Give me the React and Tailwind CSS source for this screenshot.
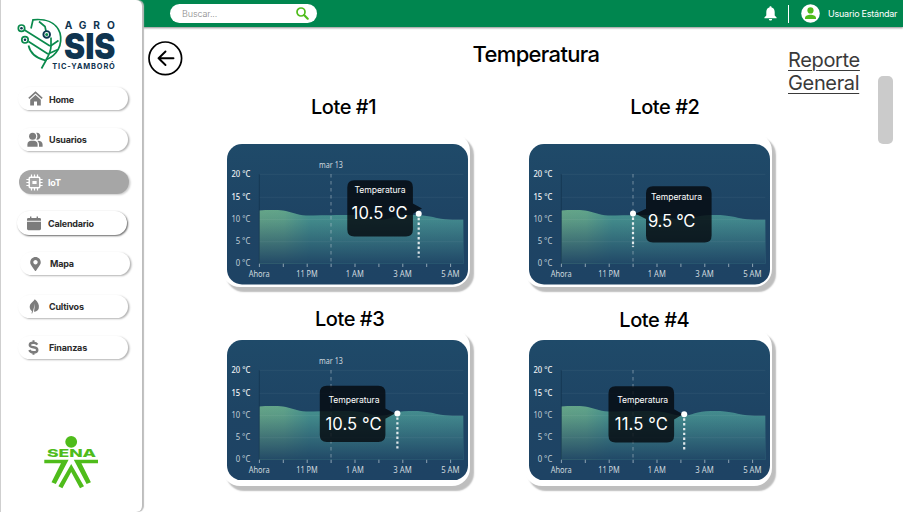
import { FaMapMarkerAlt } from 'react-icons/fa';

const NOTO = "'Noto Sans', 'Open Sans', sans-serif";
const INTER = 'Inter, sans-serif';

function AgroLogo() {
  return (
    <svg className="block overflow-visible" width="100" height="54" viewBox="17 17 100 54">
      <g fill="none" stroke="#0a8a4c" strokeWidth="1.7">
        <path d="M31 28.5 L33 19.8 C45 18.5 56 22 60 33 C63 45 57 55 46.5 59.5 L41.5 68.5" />
        <path d="M24.5 30 L50 46 M28.5 41.5 L48 54 M51 37.5 V46 C51 50 49 55 46 60" />
        <path d="M39 21.5 L45 26.5 L46 31 M50.5 46 L58.5 40.5 M49 53.5 L58 49.5 M28.5 45.5 C30 52 35 58 45.5 60.5" />
        <circle cx="21.5" cy="28.2" r="3.2" />
        <circle cx="25" cy="39.8" r="3.2" />
      </g>
      <circle cx="21.5" cy="28.2" r="1.3" fill="#0d3550" />
      <circle cx="25" cy="39.8" r="1.3" fill="#0d3550" />
      <circle cx="46.7" cy="34.4" r="3.3" fill="#fff" stroke="#0d3550" strokeWidth="1.9" />
      <circle cx="46.7" cy="34.4" r="1.5" fill="#0a8a4c" />
      <g fill="#0f3450" fontFamily={INTER}>
        <text x="64.8" y="29.2" fontSize="10.2" fontWeight="700" textLength="50">AGRO</text>
        <text x="64" y="58.8" fontSize="35" fontWeight="900" textLength="51.5" lengthAdjust="spacingAndGlyphs">SIS</text>
        <text x="52.3" y="69.3" fontSize="7.4" fontWeight="700" textLength="62.5">TIC-YAMBORÓ</text>
      </g>
    </svg>
  );
}

function SenaLogo() {
  return (
    <svg className="block" width="56" height="54" viewBox="43 435 56 54" fill="#4fbc1b">
      <circle cx="71.2" cy="441.8" r="5.9" />
      <text x="46.9" y="457.4" fontSize="10.4" fontWeight="800" fontFamily={INTER} textLength="49.2" lengthAdjust="spacingAndGlyphs">SENA</text>
      <path d="M44.3 459.7H68.6L55.8 484L51.5 482.3L61 463.3H44.3Z" />
      <path d="M98 459.7H73.8L86.6 484L90.9 482.3L81.4 463.3H98Z" />
      <path d="M71.2 464L84 486.3L80 488.3L71.2 472L62.4 488.3L58.4 486.3Z" />
    </svg>
  );
}

function HomeIcon() {
  return (
    <svg width="15" height="15" viewBox="0 0 15 15" fill="#7c7c7c">
      <path d="M7.5 0.3L14.7 6.8L13.6 8L7.5 2.6L1.4 8L0.3 6.8Z" />
      <path d="M7.5 4L12.8 8.7V14.6H9V10.4H6V14.6H2.2V8.7Z" />
    </svg>
  );
}

function UsersIcon() {
  return (
    <svg width="16" height="16" viewBox="0 0 16 16" fill="#7c7c7c">
      <circle cx="5.6" cy="4.2" r="3.5" />
      <path d="M0.4 14.8V12.6C0.4 10 2.2 8.8 4.2 8.8H6.8C9 8.8 10.6 10 10.6 12.6V14.8Z" />
      <path d="M9.2 0.8C11.6 0.3 13.4 2 13.4 4.2S11.6 8.1 9.2 7.6C10.8 5.6 10.8 2.8 9.2 0.8Z" />
      <path d="M10.4 8.9C13.4 8.6 15.6 10 15.6 12.6V14.8H12V12.6C12 11 11.4 9.8 10.4 8.9Z" />
    </svg>
  );
}

function ChipIcon() {
  return (
    <svg width="17" height="17" viewBox="0 0 17 17" fill="none" stroke="#fff">
      <rect x="3.2" y="3.2" width="10.6" height="10.6" rx="1.2" strokeWidth="1.5" />
      <rect x="6.4" y="7" width="4.2" height="3" fill="#fff" stroke="none" />
      <path
        strokeWidth="1.2"
        d="M5.5 0.4V3M8.5 0.4V3M11.5 0.4V3M5.5 14V16.6M8.5 14V16.6M11.5 14V16.6M0.4 5.5H3M0.4 8.5H3M0.4 11.5H3M14 5.5H16.6M14 8.5H16.6M14 11.5H16.6"
      />
    </svg>
  );
}

function CalendarIcon() {
  return (
    <svg width="14" height="15" viewBox="0 0 14 15" fill="#7c7c7c">
      <path d="M3 0.5H4.4V2H9.6V0.5H11V2H12.6Q14 2 14 3.3V4.8H0V3.3Q0 2 1.4 2H3Z" />
      <path d="M0 5.8H14V12.8Q14 14.2 12.6 14.2H1.4Q0 14.2 0 12.8Z" />
    </svg>
  );
}

function LeafIcon() {
  return (
    <svg width="11" height="15" viewBox="0 0 11 15" fill="#7c7c7c">
      <path d="M5.8 0.3C9 3 10.5 6 9.8 9.2C9.2 11.5 7.5 12.6 5 12.8L6 4.5L4 12.2L3.2 14.6L2.5 14.4L3 12.3C0.6 10.5 0.2 8 1.2 5.6C2.2 3.5 4.5 2.8 5.8 0.3Z" />
    </svg>
  );
}

function DollarIcon() {
  return (
    <svg width="11" height="15" viewBox="0 0 11 15" fill="none" stroke="#7c7c7c">
      <path d="M9.3 4.6C8.6 3.2 7.2 2.7 5.5 2.7C3.3 2.7 1.8 3.5 1.8 4.9C1.8 6.6 3.4 6.9 5.5 7.3C7.8 7.7 9.3 8.2 9.3 9.9C9.3 11.4 7.8 12.3 5.5 12.3C3.5 12.3 2 11.6 1.4 10" strokeWidth="2.4" />
      <path d="M5.5 0.2V3M5.5 12V14.8" strokeWidth="2" />
    </svg>
  );
}

const NAV = [
  { label: 'Home', icon: <HomeIcon />, box: 'ml-[18px] mt-[16px] h-[23px] pl-[10px]', text: 'ml-[6px] mt-[3px]', look: 'bg-white shadow-[1.5px_1px_2px_rgba(0,0,0,0.3)]' },
  { label: 'Usuarios', icon: <UsersIcon />, box: 'ml-[18px] mt-[18px] h-[23px] pl-[9px]', text: 'ml-[6px]', look: 'bg-white shadow-[1.5px_1px_2px_rgba(0,0,0,0.3)]' },
  { label: 'IoT', icon: <ChipIcon />, box: 'ml-[19px] mt-[19px] h-[24px] pl-[7px]', text: 'ml-[5px] mt-px text-white', look: 'bg-[#a6a6a6] shadow-[1.5px_1px_2px_rgba(0,0,0,0.2)]' },
  { label: 'Calendario', icon: <CalendarIcon />, box: 'ml-[17px] mt-[17px] h-[24px] pl-[10px]', text: 'ml-[7px] mt-px', look: 'bg-white shadow-[1px_1px_2px_rgba(0,0,0,0.6)]' },
  { label: 'Mapa', icon: <FaMapMarkerAlt className="w-[13px]" size={14} color="#7c7c7c" />, box: 'ml-[20px] mt-[17px] h-[23px] pl-[9px]', text: 'ml-[8px]', look: 'bg-white shadow-[1.5px_1px_2px_rgba(0,0,0,0.3)]' },
  { label: 'Cultivos', icon: <LeafIcon />, box: 'ml-[18px] mt-[20px] h-[23px] pl-[11px]', text: 'ml-[9px]', look: 'bg-white shadow-[1.5px_1px_2px_rgba(0,0,0,0.3)]' },
  { label: 'Finanzas', icon: <DollarIcon />, box: 'ml-[18px] mt-[18px] h-[23px] pl-[10px]', text: 'ml-[10px]', look: 'bg-white shadow-[1.5px_1px_2px_rgba(0,0,0,0.3)]' },
];

function Sidebar() {
  return (
    <aside className="z-10 col-start-1 row-span-2 row-start-1 flex w-[142px] flex-col rounded-r-[6px] border-l border-[#cfcfcf] bg-white shadow-[2px_0_1px_#bdbdbd]">
      <div className="ml-[16px] mt-[17px]">
        <AgroLogo />
      </div>
      <nav className="-ml-px flex flex-col">
        {NAV.map((item) => (
          <a key={item.label} className={`flex w-[110px] items-center rounded-full text-[9px] font-bold tracking-[-0.2px] text-[#2b2b2b] ${item.box} ${item.look}`}>
            {item.icon}
            <span className={item.text}>{item.label}</span>
          </a>
        ))}
      </nav>
      <div className="ml-[42px] mt-[76px]">
        <SenaLogo />
      </div>
    </aside>
  );
}

function Header() {
  return (
    <header className="col-span-2 col-start-1 row-start-1 flex h-[27px] items-center bg-[#00864f] pl-[170px] shadow-[0_1px_2px_rgba(0,0,0,0.45)]">
      <div className="flex h-[19px] w-[147px] items-center justify-between rounded-full bg-white pl-[12px] pr-[8px] text-[9px] font-light tracking-[-0.1px] text-[#8a8a8a]">
        Buscar...
        <svg width="13" height="13" viewBox="0 0 13 13" fill="none" stroke="#4fbc1b" strokeLinecap="round">
          <circle cx="5" cy="5" r="4" strokeWidth="1.7" />
          <path d="M8.3 8.3L11.7 11.7" strokeWidth="2.2" />
        </svg>
      </div>
      <svg className="ml-[447px]" width="13" height="15" viewBox="0 0 13 15" fill="#fff">
        <path d="M6.5 0.3C7.2 0.3 7.6 0.8 7.6 1.5C9.7 2 10.7 3.8 10.7 6V9.6L12.6 11.6V12.3H0.4V11.6L2.3 9.6V6C2.3 3.8 3.3 2 5.4 1.5C5.4 0.8 5.8 0.3 6.5 0.3ZM4.9 13H8.1C8.1 14 7.4 14.6 6.5 14.6S4.9 14 4.9 13Z" />
      </svg>
      <div className="ml-[11px] h-[18px] w-px bg-white" />
      <svg className="ml-[12px]" width="19" height="19" viewBox="0 0 19 19">
        <circle cx="9.5" cy="9.5" r="9.3" fill="#fff" />
        <circle cx="9.5" cy="6.4" r="3.1" fill="#4fbc1b" />
        <path d="M4 14.2C4 11.6 7 10.7 9.5 10.7S15 11.6 15 14.2V15H4Z" fill="#4fbc1b" />
      </svg>
      <span className="ml-[8px] whitespace-nowrap text-[9px] tracking-[-0.23px] text-white">Usuario Estándar</span>
    </header>
  );
}

const WAVE = 'M32.3 66.4C40 65.8 50 65.8 56 66.4C64 67.4 70 71 79 71.4C98 71.8 116 70.4 130 71.4C140 72.4 146 75.7 154 75.7C163 75.7 167 71 182 71C201 70.6 206 73.5 214 74.8C222 76 229 75.7 236.3 75.7V119.7H32.3Z';

const TICKS = [0, 1, 2, 3, 4, 5, 6, 7, 8];
const HOURS = ['Ahora', '11 PM', '1 AM', '3 AM', '5 AM'];
const HOUR_WIDTHS = [21, 21.5, 18, 18.5, 18.5];
const DEGREES = ['20 °C', '15 °C', '10 °C', '5 °C', '0 °C'];

function Chart({ id, date, tip }) {
  const w = 65.6;
  const edge = tip.side === 'right' ? tip.x + w : tip.x;
  return (
    <svg className="block" width="241" height="140.5" viewBox="0 0 241 140.5">
      <defs>
        <linearGradient id={`bg${id}`} x1="0" y1="0" x2="0" y2="1">
          <stop offset="0" stopColor="#1f4a69" />
          <stop offset="0.5" stopColor="#1e4464" />
          <stop offset="1" stopColor="#1e4364" />
        </linearGradient>
        <linearGradient id={`hue${id}`} x1="0" y1="0" x2="1" y2="0">
          <stop offset="0" stopColor="#65a588" />
          <stop offset="0.12" stopColor="#61a48a" />
          <stop offset="0.25" stopColor="#46928f" />
          <stop offset="1" stopColor="#458e91" />
        </linearGradient>
        <linearGradient id={`fade${id}`} x1="0" y1="66" x2="0" y2="120" gradientUnits="userSpaceOnUse">
          <stop offset="0" stopColor="#1e4364" stopOpacity="0" />
          <stop offset="0.2" stopColor="#1e4364" stopOpacity="0.12" />
          <stop offset="1" stopColor="#1e4364" stopOpacity="0.93" />
        </linearGradient>
      </defs>
      <rect width="241" height="140.5" rx="15" fill={`url(#bg${id})`} />
      <path d={WAVE} fill={`url(#hue${id})`} />
      <path d={WAVE} fill={`url(#fade${id})`} />
      {[30.3, 53.3, 75.6, 97.7].map((y) => (
        <path key={y} d={`M32.3 ${y}H236.3`} stroke="#fff" strokeOpacity="0.08" strokeWidth="0.7" />
      ))}
      <path d="M32.3 30.3V119.7" stroke="#12304a" strokeOpacity="0.8" strokeWidth="0.8" />
      <path d="M104 30V119" stroke="#c5d2da" strokeOpacity="0.5" strokeWidth="1" strokeDasharray="3.5 3.5" />
      {TICKS.map((i) => (
        <path key={i} d={`M${32.4 + i * 23.9} 119.7V123`} stroke="#c5d2da" strokeOpacity="0.75" strokeWidth="0.9" />
      ))}
      <g fontFamily={NOTO} fontSize="8.7" fill="#cfd9df">
        {DEGREES.map((d, i) => (
          <text key={d} x="23.3" y={33.4 + i * 22.2} textAnchor="end" textLength={i < 3 ? 18.8 : 14.6} lengthAdjust="spacingAndGlyphs" fontWeight={i < 2 ? 500 : 400} fill={i < 2 ? '#eef2f4' : '#c2cfd7'}>{d}</text>
        ))}
        {HOURS.map((h, i) => (
          <text key={h} x={32.2 + i * 47.8} y="133.2" textAnchor="middle" textLength={HOUR_WIDTHS[i]} lengthAdjust="spacingAndGlyphs">{h}</text>
        ))}
        {date && <text x="104" y="24.2" textAnchor="middle" textLength="23.8" lengthAdjust="spacingAndGlyphs">{date}</text>}
      </g>
      <path
        d={`M${tip.dot[0]} ${tip.dot[1] + 4}V${tip.end}`}
        stroke="#fff"
        strokeOpacity="0.85"
        strokeWidth="2.2"
        strokeDasharray="2.4 2.4"
      />
      <path
        fill="#05090d"
        fillOpacity="0.81"
        d={
          `M${tip.x + 7} ${tip.y}h${w - 14}q7 0 7 7v42.2q0 7 -7 7h${14 - w}q-7 0 -7 -7v-42.2q0 -7 7 -7Z` +
          (tip.side === 'right'
            ? `M${edge} ${tip.point[1] - 5}L${tip.point[0]} ${tip.point[1]}L${edge} ${tip.point[1] + 5.3}Z`
            : `M${edge} ${tip.point[1] - 5}V${tip.point[1] + 5.3}L${tip.point[0]} ${tip.point[1]}Z`)
        }
      />
      <circle cx={tip.dot[0]} cy={tip.dot[1]} r="3" fill="#fff" />
      <g fill="#fff" fontFamily={INTER} textAnchor="middle">
        <text x={tip.labelX} y={tip.labelY} fontSize="8.6" textLength="51">Temperatura</text>
        <text x={tip.valueX} y={tip.valueY} fontSize="16.6" textLength={tip.valueW}>{tip.value}</text>
      </g>
    </svg>
  );
}

const LOTS = [
  {
    name: 'Lote #1', title: 'pl-[89px] h-[38px]', card: 'h-[154px]', date: 'mar 13',
    tip: { side: 'right', x: 120.3, y: 36.2, point: [195, 64.5], dot: [191.7, 69.8], end: 113.5, labelX: 153, labelY: 48.9, valueX: 152.6, valueY: 75.3, valueW: 56, value: '10.5 °C' },
  },
  {
    name: 'Lote #2', title: 'pl-[106px] h-[38px]', card: 'h-[154px]', date: null,
    tip: { side: 'left', x: 117, y: 42.2, point: [106.5, 69.8], dot: [104, 69.5], end: 103, labelX: 147.5, labelY: 55.9, valueX: 142.7, valueY: 82.5, valueW: 47.5, value: '9.5 °C' },
  },
  {
    name: 'Lote #3', title: 'pl-[93px] h-[21.5px]', card: 'h-[157px]', date: 'mar 13',
    tip: { side: 'right', x: 92.8, y: 45.7, point: [168, 73.4], dot: [170.4, 73.4], end: 110.8, labelX: 127, labelY: 63, valueX: 126.5, valueY: 90, valueW: 56, value: '10.5 °C' },
  },
  {
    name: 'Lote #4', title: 'pl-[95px] pt-[1px] h-[21.5px]', card: 'h-[157px]', date: null,
    tip: { side: 'right', x: 79.5, y: 46.2, point: [154, 74.3], dot: [155.2, 74.3], end: 111.5, labelX: 113.7, labelY: 63.4, valueX: 112.3, valueY: 90.3, valueW: 53, value: '11.5 °C' },
  },
];

function LotCard({ lot, index }) {
  return (
    <section>
      <h2 className={`text-[20px] font-medium leading-[24px] tracking-[-0.45px] text-black ${lot.title}`}>{lot.name}</h2>
      <div className={`w-[248px] rounded-[18px] bg-white pl-[5px] pt-[11px] shadow-[4px_4.5px_1.5px_#bebebe] ${lot.card}`}>
        <Chart id={index} date={lot.date} tip={lot.tip} />
      </div>
    </section>
  );
}

export default function App() {
  return (
    <div className="grid h-[512px] w-[903px] grid-cols-[144px_1fr] grid-rows-[27px_1fr] overflow-hidden bg-white font-[Inter,sans-serif]">
      <Header />
      <Sidebar />
      <main className="col-start-2 row-start-2 flex items-start">
        <button className="ml-[4px] mt-[14px]" aria-label="Volver">
          <svg className="block" width="35" height="35" viewBox="0 0 35 35" fill="none" stroke="#000">
            <circle cx="17.3" cy="17.3" r="16.3" strokeWidth="1.7" />
            <path d="M25.5 17.3H10.5M17.5 10.5L10.6 17.3L17.5 24" strokeWidth="1.9" strokeLinecap="round" strokeLinejoin="round" />
          </svg>
        </button>
        <div className="ml-[39px] w-[551px]">
          <h1 className="ml-[250.5px] mt-[14px] whitespace-nowrap text-[22px] font-medium leading-[26px] tracking-[-0.66px] text-black">Temperatura</h1>
          <div className="mt-[28px] grid grid-cols-[302.3px_248px] gap-y-[20px]">
            {LOTS.map((lot, i) => (
              <LotCard key={lot.name} lot={lot} index={i} />
            ))}
          </div>
        </div>
        <a className="ml-[15px] mt-[22px] w-[76px] text-[20px] leading-[23px] tracking-[-0.35px] text-[#3a3a3a] underline decoration-1 underline-offset-[3px]">
          Reporte General
        </a>
        <div className="ml-[14px] mt-[49px] h-[68px] w-[15px] rounded-[5px] bg-[#cbcbcb]" />
      </main>
    </div>
  );
}
